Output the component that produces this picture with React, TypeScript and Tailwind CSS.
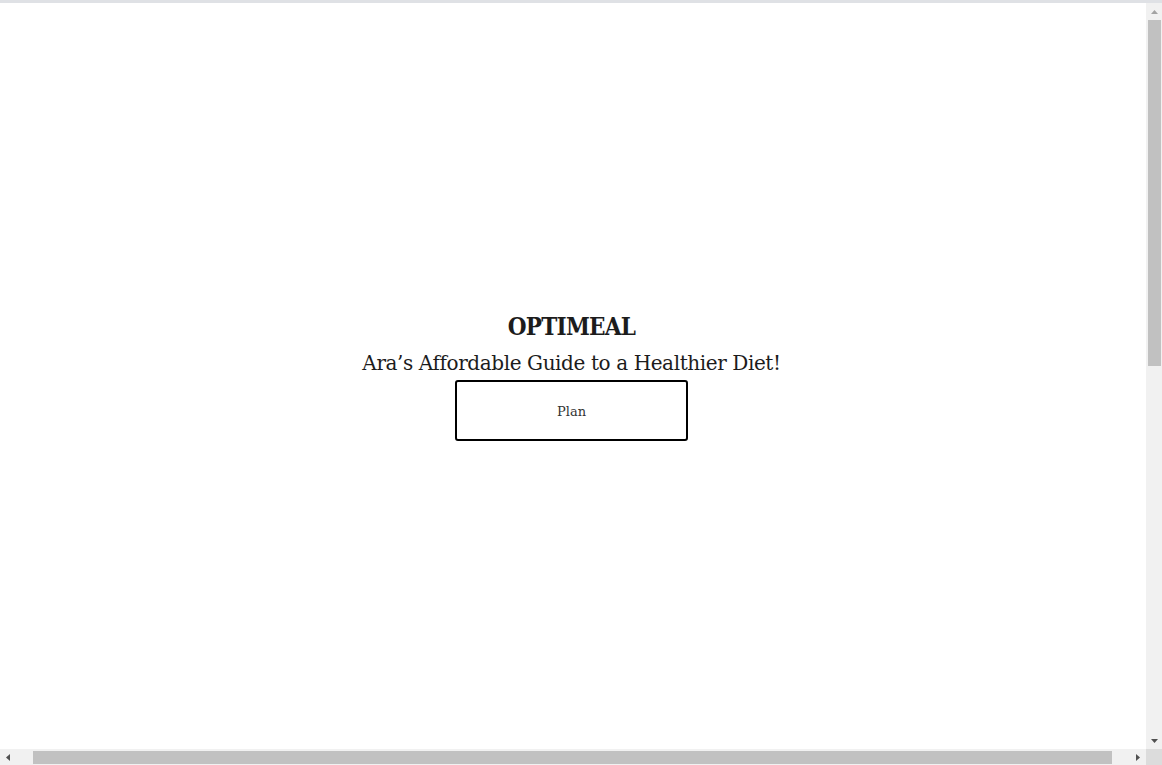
import React from "react";

const Tri = ({ dir, color }: { dir: "up" | "down" | "left" | "right"; color: string }) => {
  const pts: Record<string, string> = {
    up: "0,4 3.5,0 7,4",
    down: "0,0 7,0 3.5,4",
    left: "4,0 4,7 0,3.5",
    right: "0,0 0,7 4,3.5",
  };
  const horiz = dir === "left" || dir === "right";
  return (
    <svg width={horiz ? 4 : 7} height={horiz ? 7 : 4} viewBox={horiz ? "0 0 4 7" : "0 0 7 4"}>
      <polygon points={pts[dir]} fill={color} />
    </svg>
  );
};

export default function App() {
  return (
    <div className="h-screen w-full flex flex-col bg-white overflow-hidden">
      <div className="h-[3px] shrink-0 bg-[#dfe1e5]" />
      <div className="flex flex-1 min-h-0">
        <main
          className="flex-1 flex flex-col items-center justify-center pr-[3px] pt-[2px] text-[#1c1c1c]"
          style={{ fontFamily: '"DejaVu Serif", "Liberation Serif", serif' }}
        >
          <h1 className="text-[24px] font-bold leading-[30px] font-stretch-condensed tracking-[-0.75px]">OPTIMEAL</h1>
          <h2 className="text-[20px] leading-[28px] mt-[7px] tracking-[-0.4px]">Ara’s Affordable Guide to a Healthier Diet!</h2>
          <button className="mt-[3px] w-[233px] h-[61px] pt-[3px] border-2 border-black rounded-[3px] bg-white text-[13px] text-[#333]">
            Plan
          </button>
          <div className="h-[1px]" />
        </main>
        <div className="w-4 shrink-0 bg-[#f1f1f1] flex flex-col">
          <div className="h-[17px] flex items-center justify-center pt-[1px]">
            <Tri dir="up" color="#a3a3a3" />
          </div>
          <div className="h-[346px] ml-[2px] mr-[1px] bg-[#c1c1c1]" />
          <div className="flex-1" />
          <div className="h-[16px] flex items-center justify-center pb-[1px]">
            <Tri dir="down" color="#505050" />
          </div>
        </div>
      </div>
      <div className="h-4 shrink-0 flex bg-[#f1f1f1]">
        <div className="w-[16px] flex items-center justify-center">
          <Tri dir="left" color="#505050" />
        </div>
        <div className="w-[17px]" />
        <div className="w-[1079px] mt-[2px] mb-[1px] bg-[#c1c1c1]" />
        <div className="flex-1" />
        <div className="w-[16px] flex items-center justify-center">
          <Tri dir="right" color="#505050" />
        </div>
        <div className="w-4 bg-[#dcdcdc]" />
      </div>
    </div>
  );
}
